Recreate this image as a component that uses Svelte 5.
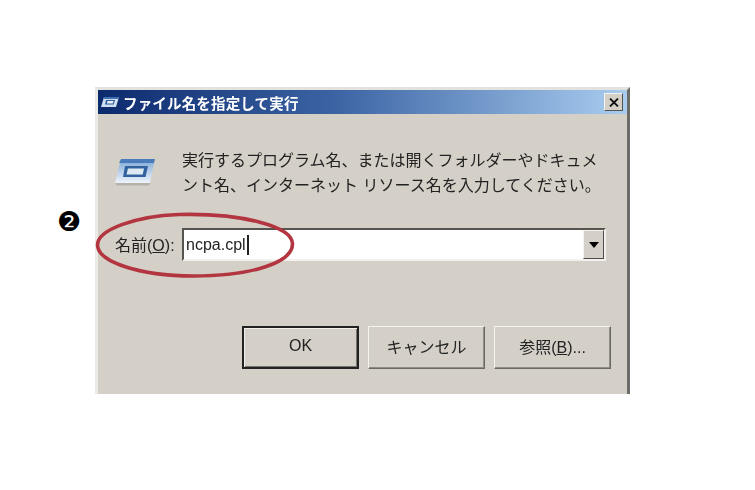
<script>
  let command = $state('ncpa.cpl');
</script>

<main class="page">
  <span class="step">❷</span>

  <div class="window">
    <header class="titlebar">
      <svg class="title-icon" viewBox="0 0 18 12" width="18" height="12">
        <path d="M3 1h15l-3 10H0z" fill="#cfe0f2" />
        <path d="M3 1h15l-.6 2H2.400z" fill="#3f6fb0" />
        <path d="M5 4h9l-1.300 4.500H4z" fill="#2c5a9c" />
        <path d="M6.500 5h6l-.7 2.500H5.800z" fill="#e8f0f8" />
      </svg>
      <span class="title">ファイル名を指定して実行</span>
      <button class="close" aria-label="閉じる">
        <svg viewBox="0 0 10 9" width="10" height="9">
          <path d="M1 .5l8 8M9 .5l-8 8" stroke="#111" stroke-width="1.800" fill="none" />
        </svg>
      </button>
    </header>

    <div class="intro">
      <svg class="run-icon" viewBox="0 0 44 30" width="44" height="30">
        <defs>
          <linearGradient id="face" x1="0" y1="0" x2="0" y2="1">
            <stop offset="0" stop-color="#8fb4dc" />
            <stop offset="1" stop-color="#eef4fa" />
          </linearGradient>
        </defs>
        <path d="M8 1h34l-1 4H6z" fill="#4a7cbc" />
        <path d="M7 5h34l-4 20H2z" fill="url(#face)" />
        <path d="M12 8h23l-2.500 11H10z" fill="#31629f" />
        <path d="M15 10.500h16l-1.300 6H13.500z" fill="#dfe9f4" />
        <path d="M2 25h35l-1 2.500H4z" fill="#b4b1aa" />
      </svg>
      <p>実行するプログラム名、または開くフォルダーやドキュメ<br />ント名、インターネット リソース名を入力してください。</p>
    </div>

    <div class="field">
      <label for="cmd"><span>名前(<u>O</u>):</span></label>
      <div class="combo">
        <div class="input-wrap">
          <input id="cmd" bind:value={command} size="8" />
          <i class="caret"></i>
        </div>
        <button class="arrow" aria-label="開く"><b></b></button>
      </div>
      <svg class="circle" viewBox="0 0 200 66" width="200" height="66">
        <path
          d="M84 2.500C40 4 2.500 18 2.500 33c0 16 40 31 96 31 60 0 99-14 99-32C197.500 14 146 1 84 2.500z"
          fill="none"
          stroke="#b23540"
          stroke-width="3.600"
        />
      </svg>
    </div>

    <div class="actions">
      <button class="btn default">OK</button>
      <button class="btn">キャンセル</button>
      <button class="btn">参照(<u>B</u>)...</button>
    </div>
  </div>
</main>

<style>
  :global(body) {
    margin: 0;
    background: #fff;
  }

  .page {
    position: relative;
    width: 755px;
    height: 490px;
    padding: 87px 0 0 95px;
    box-sizing: border-box;
    overflow: hidden;
    font-family: "Liberation Sans", "Noto Sans CJK JP", sans-serif;
    color: #1c1c1c;
  }

  .step {
    position: absolute;
    left: 57px;
    top: 206px;
    font-family: "DejaVu Sans", sans-serif;
    font-size: 27px;
    line-height: 32px;
    color: #000;
  }

  .window {
    width: 535px;
    height: 307px;
    box-sizing: border-box;
    display: flex;
    flex-direction: column;
    background: #d4d0c8;
    border-top: 3px solid #e4e2dc;
    border-left: 3px solid #eceae5;
    border-right: 3px solid #6d6c68;
    filter: blur(0.35px);
  }

  .titlebar {
    height: 24px;
    display: flex;
    align-items: center;
    gap: 4px;
    padding: 0 4px 0 3px;
    background: linear-gradient(90deg, #0c2a6e 0%, #3c64a4 45%, #a9cdf0 100%);
    color: #fff;
  }

  .title {
    font-size: 14.500px;
    font-weight: 700;
    flex: 1;
    letter-spacing: 0.17px;
  }

  .close {
    width: 19px;
    height: 18px;
    padding: 0;
    display: flex;
    align-items: center;
    justify-content: center;
    background: #d4d0c8;
    border: 1px solid;
    border-color: #f4f3ef #55544f #55544f #f4f3ef;
  }

  .intro {
    display: flex;
    align-items: flex-start;
    margin: 34px 0 0 15px;
    gap: 25px;
  }

  .run-icon {
    margin-top: 10px;
  }

  p {
    margin: 0;
    font-size: 16px;
    line-height: 25px;
    color: #222;
  }

  .field {
    position: relative;
    display: flex;
    align-items: center;
    margin: 30px 0 0 15px;
  }

  label {
    width: 67px;
    padding: 0 0 2px 2px;
    font-size: 16px;
    white-space: nowrap;
    color: #222;
  }

  .combo {
    width: 424px;
    height: 33px;
    box-sizing: border-box;
    display: flex;
    background: #fff;
    border: 2px solid;
    border-color: #55544f #f2f1ed #f2f1ed #55544f;
  }

  .input-wrap {
    flex: 1;
    display: flex;
    align-items: center;
    padding-left: 2px;
  }

  input {
    width: 61px;
    border: 0;
    padding: 0;
    outline: 0;
    background: none;
    font-family: "Liberation Sans", sans-serif;
    font-size: 16px;
    color: #222;
  }

  .caret {
    width: 1.500px;
    height: 20px;
    background: #222;
  }

  .arrow {
    width: 21px;
    padding: 0;
    display: flex;
    align-items: center;
    justify-content: center;
    background: #d4d0c8;
    border: 1px solid;
    border-color: #f4f3ef #4e4d49 #4e4d49 #f4f3ef;
  }

  .arrow b {
    width: 0;
    height: 0;
    border: 5px solid transparent;
    border-top: 6px solid #000;
    border-bottom: 0;
  }

  .circle {
    position: absolute;
    left: -18px;
    top: -16px;
    pointer-events: none;
  }

  .actions {
    display: flex;
    justify-content: flex-end;
    gap: 9px;
    margin: 65px 16px 0 0;
  }

  .btn {
    width: 117px;
    height: 43px;
    padding: 0 0 3px;
    box-sizing: border-box;
    font-family: "Liberation Sans", "Noto Sans CJK JP", sans-serif;
    font-size: 16px;
    color: #222;
    background: #d4d0c8;
    border: 1px solid;
    border-color: #f4f3ef #6a6964 #6a6964 #f4f3ef;
    box-shadow: inset -1px -1px 0 #8f8d87;
  }

  .default {
    border: 2px solid #222;
    box-shadow: inset 1px 1px 0 #f0efeb, inset -1px -1px 0 #77756f;
  }
</style>
